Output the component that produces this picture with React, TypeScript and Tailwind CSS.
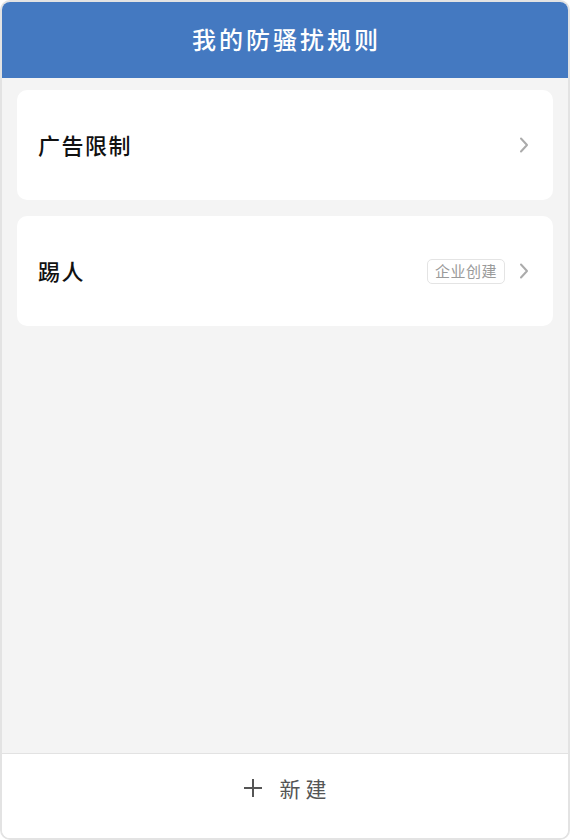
import React from 'react';

const font = { fontFamily: '"Noto Sans CJK SC", "Noto Sans", sans-serif' };

const Chevron = () => (
  <svg width="10" height="16" viewBox="0 0 10 16" fill="none" className="shrink-0">
    <path d="M2 1.5L8 8L2 14.5" stroke="#ababab" strokeWidth="2" strokeLinecap="round" strokeLinejoin="round" />
  </svg>
);

type Rule = { name: string; badge?: string };

const rules: Rule[] = [
  { name: '广告限制' },
  { name: '踢人', badge: '企业创建' },
];

const RuleCard = ({ rule }: { rule: Rule }) => (
  <div className="flex h-[110px] items-center rounded-[10px] bg-white pl-[21px] pr-[24px]">
    <span className="flex-1 pb-[3px] text-[22px] font-medium leading-none tracking-[1.5px] text-[#111]">{rule.name}</span>
    {rule.badge && (
      <span className="mr-[14px] flex h-[25px] items-center rounded-[5px] border border-[#e4e4e4] px-[7px] pb-[1px] text-[15px] leading-none tracking-[0.5px] text-[#9a9a9a]">
        {rule.badge}
      </span>
    )}
    <Chevron />
  </div>
);

export default function App() {
  return (
    <div className="h-[840px] w-[570px] bg-white" style={font}>
      <div className="flex h-full flex-col overflow-hidden rounded-[10px] border-2 border-[#e3e3e3]">
        <div className="flex h-[76px] shrink-0 items-center justify-center bg-[#4479c1] pb-[3px]">
          <h1 className="pl-[3px] text-[24px] font-medium leading-none tracking-[3px] text-white">我的防骚扰规则</h1>
        </div>
        <div className="flex flex-1 flex-col gap-4 bg-[#f4f4f4] px-[15px] pt-3">
          {rules.map((r) => (
            <RuleCard key={r.name} rule={r} />
          ))}
        </div>
        <div className="flex h-[85px] shrink-0 items-center justify-center border-t border-[#e2e2e2] bg-white pb-[16px]">
          <button className="flex items-center gap-[17px] pl-[4px] text-[#555]">
            <svg width="20" height="20" viewBox="0 0 20 20" fill="none">
              <path d="M10 1V19M1 10H19" stroke="#555" strokeWidth="2" />
            </svg>
            <span className="text-[21px] leading-none tracking-[5px]">新建</span>
          </button>
        </div>
      </div>
    </div>
  );
}
